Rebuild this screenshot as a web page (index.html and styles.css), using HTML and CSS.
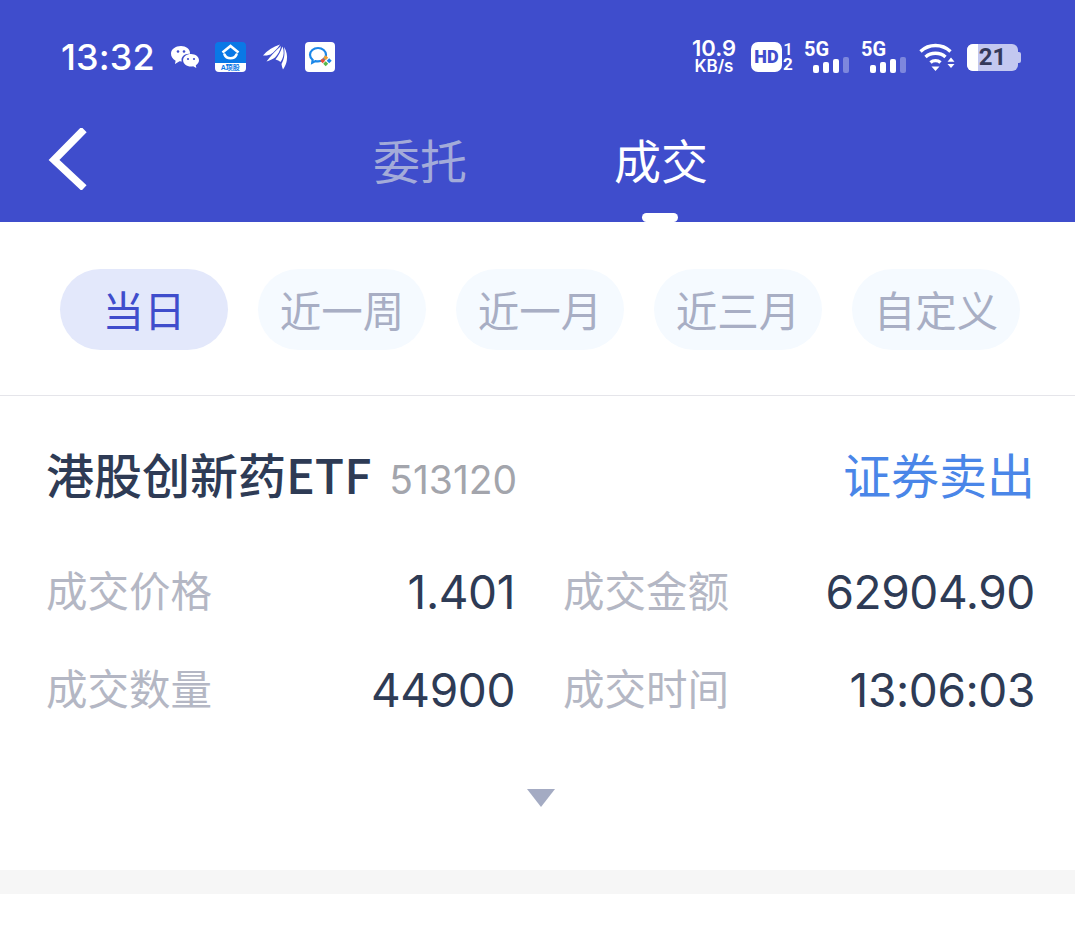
FILE: index.html
```html
<!DOCTYPE html>
<html lang="zh-CN">
<head>
    <meta charset="UTF-8">
    <title>成交</title>
    <link rel="stylesheet" href="styles.css">
</head>
<body>
    <div class="header">
        <div class="status-bar">
            <div class="status-left">
                <span class="clock">13:32</span>
                <!-- wechat -->
                <svg class="ic-wechat" width="30" height="26" viewBox="0 0 30 26">
                    <path fill="#fff" d="M11 2c5 0 9 3 9 7 0 .3 0 .5-.1.8-4.500-.6-8.400 2.400-8.400 6 0 .6.100 1.100.2 1.600-.8.100-1.500 0-2.200-.1L5 20l.6-3.300C2.500 15.200 1 12.400 1 9.500 1 5.300 5.500 2 11 2z"/>
                    <path fill="#fff" d="M21 10c4.500 0 8 2.900 8 6.200 0 2.100-1.300 3.800-3.200 5l.5 2.800-3.200-1.700c-.7.100-1.400.2-2.100.2-4.400 0-7.900-2.800-7.900-6.300S16.600 10 21 10z"/>
                    <circle cx="8" cy="7.500" r="1.300" fill="#3f4dcc"/><circle cx="14" cy="7.500" r="1.300" fill="#3f4dcc"/>
                    <circle cx="18" cy="15" r="1.100" fill="#3f4dcc"/><circle cx="24" cy="15" r="1.100" fill="#3f4dcc"/>
                </svg>
                <!-- blue app -->
                <div class="app-blue">
                    <svg width="31" height="21" viewBox="0 0 31 21">
                        <path fill="none" stroke="#fff" stroke-width="2.600" d="M7.500 10.500 15.500 4l8 6.500"/>
                        <path fill="none" stroke="#fff" stroke-width="2.600" stroke-linecap="round" d="M9.500 12.500c2 5 10 5 12 0"/>
                    </svg>
                    <span class="app-blue-label">A项股</span>
                </div>
                <!-- feather -->
                <svg class="ic-feather" width="25" height="26" viewBox="0 0 25 26">
                    <path fill="#fff" d="M0 11.500C4 6.500 10 3 17 .5 14.500 4.500 11 8 7.500 10.500 5 11.500 2.500 11.500 0 11.500z"/>
                    <path fill="#fff" d="M3.500 17.500C7 12.500 12.500 7 18 2c-.8 4.500-3 8.500-6 11.500-2.300 1.700-5.500 3.300-8.500 4z"/>
                    <path fill="#fff" d="M12.500 15.500C15.500 11.500 18 7 19.500 2.500c1.800 4.500 1.500 9-.5 13-.4.800-1 1.700-1.600 2.500-1-1.200-3-2-4.900-2.500z"/>
                    <path fill="#fff" d="M21 3c2.500 4 3.700 8.500 2.800 13.500-.5 3-1.700 6-3.800 9-.8-1.800-1.300-3.700-1.500-5.500C21.500 15 22 9 21 3z"/>
                </svg>
                <!-- chat app -->
                <div class="app-chat">
                    <svg width="30" height="30" viewBox="0 0 30 30">
                        <path fill="none" stroke="#1b87e8" stroke-width="2.200" d="M13 6c-4.500 0-8 3-8 6.800 0 2 1 3.800 2.600 5l-.4 3 3.200-1.700c.8.200 1.700.3 2.600.3 3 0 8-2 8-6.600C21 9 17.500 6 13 6z"/>
                        <rect x="19" y="14" width="3.500" height="3.500" fill="#f0a030" transform="rotate(45 20.700 15.700)"/>
                        <rect x="16" y="17" width="3.500" height="3.500" fill="#e8503a" transform="rotate(45 17.700 18.700)"/>
                        <rect x="19" y="20" width="3.500" height="3.500" fill="#58b848" transform="rotate(45 20.700 21.700)"/>
                        <rect x="22.500" y="17" width="3.500" height="3.500" fill="#1b87e8" transform="rotate(45 24.200 18.700)"/>
                    </svg>
                </div>
            </div>
            <div class="status-right">
                <div class="speed"><span>10.9</span><span class="speed-unit">KB/s</span></div>
                <div class="hd">
                    <span class="hd-box">HD</span>
                    <span class="hd-nums"><span class="hd-one">1</span><span>2</span></span>
                </div>
                <div class="signal">
                    <span class="signal-label">5G</span>
                    <div class="bars"><i class="b1"></i><i class="b2"></i><i class="b3"></i><i class="b4"></i></div>
                </div>
                <div class="signal signal-second">
                    <span class="signal-label">5G</span>
                    <div class="bars"><i class="b1"></i><i class="b2"></i><i class="b3"></i><i class="b4"></i></div>
                </div>
                <svg class="ic-wifi" width="38" height="30" viewBox="0 0 38 30">
                    <g fill="none" stroke="#fff" stroke-width="3.400">
                        <path d="M1.500 9.500c8.500-8 21.500-8 30 0"/>
                        <path d="M6.500 15c5.500-5 14.500-5 20 0"/>
                        <path d="M11.500 20.500c2.800-2.500 7.200-2.500 10 0"/>
                    </g>
                    <path fill="#fff" d="M12.500 24.500h8L16.500 29zM32 15.500l3.500 4.200h-7zM28.500 22h7L32 26z"/>
                </svg>
                <div class="battery">
                    <div class="battery-fill"></div>
                    <span class="battery-level">21</span>
                    <span class="battery-tip"></span>
                </div>
            </div>
        </div>
        <div class="nav">
            <svg class="back" width="40" height="62" viewBox="0 0 40 62">
                <path fill="none" stroke="#fff" stroke-width="7.500" d="M36 2.500 6 33l30 28" transform="translate(0 -1)"/>
            </svg>
            <div class="tabs">
                <span class="tab">委托</span>
                <span class="tab tab-active">成交</span>
            </div>
        </div>
    </div>

    <div class="filters">
        <span class="pill pill-active">当日</span>
        <span class="pill">近一周</span>
        <span class="pill">近一月</span>
        <span class="pill">近三月</span>
        <span class="pill">自定义</span>
    </div>

    <div class="order">
        <div class="order-title">
            <div class="order-name">港股创新药ETF<span class="order-code">513120</span></div>
            <span class="order-type">证券卖出</span>
        </div>
        <div class="order-grid">
            <div class="cell cell-left"><span class="label">成交价格</span><span class="value">1.401</span></div>
            <div class="cell cell-right"><span class="label">成交金额</span><span class="value">62904.90</span></div>
            <div class="cell cell-left"><span class="label">成交数量</span><span class="value">44900</span></div>
            <div class="cell cell-right"><span class="label">成交时间</span><span class="value">13:06:03</span></div>
        </div>
        <div class="expand"><span class="arrow"></span></div>
    </div>
    <div class="divider"></div>
</body>
</html>
```

FILE: styles.css
```css
* {
    box-sizing: border-box;
}

body {
    margin: 0;
    background-color: #fff;
    font-family: "Noto Sans CJK SC", "Noto Sans", sans-serif;
    color: #2e3b55;
    overflow: hidden;
}

.header {
    height: 222px;
    background-color: #3f4dcc;
    color: #fff;
}

.status-bar {
    height: 104px;
    padding: 10px 57px 0 61px;
    display: flex;
    justify-content: space-between;
    align-items: center;
}

.status-left,
.status-right {
    display: flex;
    align-items: center;
}

.clock {
    font-family: Inter, Roboto, sans-serif;
    font-size: 36px;
    font-weight: 500;
    letter-spacing: 0.1px;
    margin-right: 15px;
}

.ic-wechat {
    margin-right: 15px;
}

.app-blue {
    width: 31px;
    height: 30px;
    margin-right: 17px;
    border-radius: 4px;
    background: linear-gradient(#0a78e6 70%, #fff 70%);
    display: flex;
    flex-direction: column;
    align-items: center;
    position: relative;
}

.app-blue-label {
    position: absolute;
    bottom: 0;
    font-family: "Liberation Sans", "Noto Sans CJK SC", sans-serif;
    font-size: 7px;
    line-height: 9px;
    font-weight: 700;
    color: #0a78e6;
}

.ic-feather {
    margin-right: 17px;
}

.app-chat {
    width: 30px;
    height: 30px;
    border-radius: 4px;
    background-color: #fff;
}

.speed {
    display: flex;
    flex-direction: column;
    align-items: center;
    font-family: Inter, Roboto, sans-serif;
    font-size: 22px;
    line-height: 19px;
    font-weight: 600;
    width: 46px;
    margin-right: 14px;
}

.speed-unit {
    font-size: 17px;
    line-height: 17px;
}

.hd {
    display: flex;
    align-items: center;
    margin-right: 10px;
}

.hd-box {
    width: 31px;
    height: 30px;
    border-radius: 7px;
    background-color: #fff;
    color: #3f4dcc;
    font-family: Roboto, sans-serif;
    font-size: 18px;
    font-weight: 900;
    line-height: 30px;
    text-align: center;
}

.hd-nums {
    display: flex;
    flex-direction: column;
    align-items: center;
    width: 12px;
    font-family: Roboto, sans-serif;
    font-size: 17px;
    line-height: 15px;
    font-weight: 700;
}

.hd-one {
    font-weight: 500;
}

.signal {
    position: relative;
    width: 45px;
    height: 32px;
    margin-right: 12px;
}

.signal-second {
    margin-right: 13px;
}

.signal-label {
    position: absolute;
    left: 0;
    top: -2px;
    font-family: Roboto, sans-serif;
    font-size: 20px;
    line-height: 20px;
    font-weight: 700;
}

.bars {
    position: absolute;
    right: 0;
    bottom: 0;
    display: flex;
    align-items: flex-end;
    gap: 4px;
}

.bars i {
    display: block;
    width: 6px;
    border-radius: 2px;
    background-color: #fff;
}

.bars .b1 { height: 8px; }
.bars .b2 { height: 11px; }
.bars .b3 { height: 14px; }
.bars .b4 { height: 16px; background-color: #7d87dd; }

.battery {
    position: relative;
    width: 51px;
    height: 27px;
    margin-left: 10px;
    border-radius: 6px;
    background-color: #c3c8f0;
    text-align: center;
}

.battery-fill {
    position: absolute;
    left: 0;
    top: 0;
    bottom: 0;
    width: 11px;
    border-radius: 6px 0 0 6px;
    background-color: #fff;
}

.battery-level {
    position: relative;
    font-family: Roboto, sans-serif;
    font-size: 24px;
    font-weight: 700;
    line-height: 27px;
    color: #34395a;
}

.battery-tip {
    position: absolute;
    right: -3px;
    top: 8px;
    width: 3px;
    height: 11px;
    border-radius: 0 2px 2px 0;
    background-color: #c3c8f0;
}

.nav {
    position: relative;
    height: 118px;
}

.back {
    position: absolute;
    left: 48px;
    top: 24px;
}

.tabs {
    display: flex;
    justify-content: center;
    gap: 147px;
    padding: 23px 0 0 6px;
}

.tab {
    position: relative;
    font-size: 47px;
    line-height: 64px;
    color: #a3abd9;
}

.tab-active {
    color: #fff;
}

.tab-active::after {
    content: "";
    position: absolute;
    left: 28px;
    bottom: -31px;
    width: 36px;
    height: 9px;
    border-radius: 5px;
    background-color: #fff;
}

.filters {
    height: 174px;
    padding: 47px 55px 0 60px;
    display: flex;
    gap: 30px;
    border-bottom: 1px solid #e5e5ea;
}

.pill {
    width: 168px;
    height: 81px;
    border-radius: 41px;
    background-color: #f5faff;
    color: #a8aec4;
    font-size: 41.5px;
    line-height: 81px;
    text-align: center;
}

.pill-active {
    background-color: #e3e8fb;
    color: #3f4dcc;
}

.order {
    height: 474px;
    padding: 0 40px 0 46px;
}

.order-title {
    height: 162px;
    padding-bottom: 8px;
    display: flex;
    justify-content: space-between;
    align-items: center;
}

.order-name {
    font-size: 48px;
    color: #2e3b55;
    font-weight: 500;
}

.order-code {
    font-family: Inter, Roboto, sans-serif;
    font-size: 39px;
    font-weight: 400;
    color: #a3a5ac;
    margin-left: 18px;
}

.order-type {
    font-size: 48px;
    color: #4a86e8;
}

.order-grid {
    display: grid;
    grid-template-columns: 469px 1fr;
    column-gap: 48px;
    margin-top: -15px;
}

.cell {
    height: 98px;
    display: flex;
    justify-content: space-between;
    align-items: center;
}

.label {
    font-size: 41.5px;
    color: #b4b7c4;
    margin-top: -6px;
}

.value {
    font-family: Inter, Roboto, sans-serif;
    font-size: 46px;
    letter-spacing: -0.4px;
    color: #2e3b55;
}

.expand {
    display: flex;
    justify-content: center;
    padding: 50px 0 0 0;
}

.arrow {
    width: 0;
    height: 0;
    border-left: 14px solid transparent;
    border-right: 14px solid transparent;
    border-top: 18px solid #a4abc3;
}

.divider {
    height: 24px;
    background-color: #f6f6f6;
}
```
